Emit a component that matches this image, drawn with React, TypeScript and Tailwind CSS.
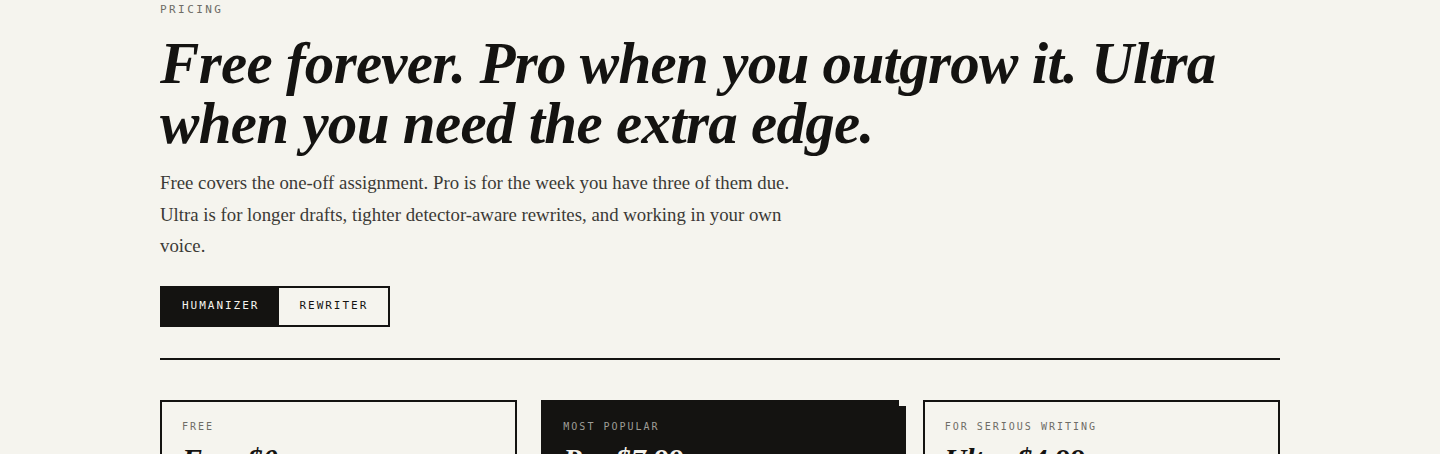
import React from "react";

function Card({ label, title, dark }: { label: string; title: string; dark?: boolean }) {
  return (
    <div
      className={
        dark
          ? "h-[120px] bg-[#141311] border-2 border-[#141311] px-[20px] pt-[17px] shadow-[7px_6px_0_0_#141311]"
          : "h-[120px] bg-[#f5f4ee] border-2 border-[#141311] px-[20px] pt-[17px]"
      }
    >
      <div
        className={
          dark
            ? "font-['DejaVu_Sans_Mono','Liberation_Mono',monospace] text-[10px] leading-[16px] tracking-[0.2em] uppercase text-[#9f9d97]"
            : "font-['DejaVu_Sans_Mono','Liberation_Mono',monospace] text-[10px] leading-[16px] tracking-[0.2em] uppercase text-[#6e6c66]"
        }
      >
        {label}
      </div>
      <div
        className={
          dark
            ? "font-['Liberation_Serif','Times_New_Roman',serif] mt-[6px] text-[30px] leading-[36px] font-bold italic text-[#f5f4ee]"
            : "font-['Liberation_Serif','Times_New_Roman',serif] mt-[6px] text-[30px] leading-[36px] font-bold italic text-[#141311]"
        }
      >
        {title}
      </div>
    </div>
  );
}

export default function App() {
  return (
    <div className="min-h-[454px] bg-[#f5f4ee] overflow-hidden">
      <div className="w-[1120px] mx-auto pt-[4px]">
        <div className="font-['DejaVu_Sans_Mono','Liberation_Mono',monospace] text-[11px] leading-[12px] tracking-[0.22em] text-[#6e6c66]">
          PRICING
        </div>
        <h1 className="font-['Liberation_Serif','Times_New_Roman',serif] mt-[17px] whitespace-nowrap text-[59px] leading-[60px] font-bold italic tracking-[-0.012em] text-[#141311]">
          Free forever. Pro when you outgrow it. Ultra
          <br />
          when you need the extra edge.
        </h1>
        <p className="font-['Liberation_Serif','Times_New_Roman',serif] mt-[14px] whitespace-nowrap text-[18.8px] leading-[31.5px] text-[#3b3a36]">
          Free covers the one-off assignment. Pro is for the week you have three of them due.
          <br />
          Ultra is for longer drafts, tighter detector-aware rewrites, and working in your own
          <br />
          voice.
        </p>
        <div className="mt-[24px] inline-flex border-2 border-[#141311]">
          <div className="font-['DejaVu_Sans_Mono','Liberation_Mono',monospace] h-[37px] px-[20px] flex items-center bg-[#141311] text-[#f5f4ee] text-[11px] tracking-[0.18em]">
            HUMANIZER
          </div>
          <div className="font-['DejaVu_Sans_Mono','Liberation_Mono',monospace] h-[37px] px-[20px] flex items-center bg-[#f5f4ee] text-[#141311] text-[11px] tracking-[0.18em]">
            REWRITER
          </div>
        </div>
        <div className="mt-[31px] h-[2px] bg-[#141311]" />
        <div className="mt-[40px] grid grid-cols-3 gap-[24px]">
          <Card label="Free" title="Free $0" />
          <Card label="Most popular" title="Pro $7.99" dark />
          <Card label="For serious writing" title="Ultra $4.99" />
        </div>
      </div>
    </div>
  );
}
